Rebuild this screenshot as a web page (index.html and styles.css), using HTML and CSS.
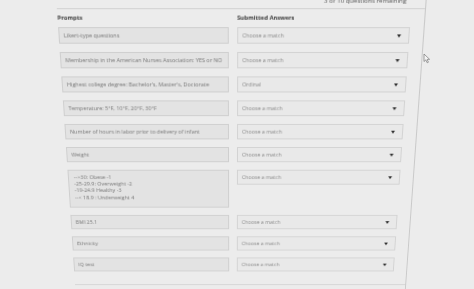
FILE: index.html
```html
<!DOCTYPE html>
<html>
<head>
<meta charset="utf-8">
<link rel="stylesheet" href="styles.css">
</head>
<body>
<div class="stage">
  <div class="page">
    <div class="remaining">3 of 10 questions remaining</div>
    <div class="panel">
      <div class="heads">
        <div class="head">Prompts</div>
        <div class="head">Submitted Answers</div>
      </div>
      <div class="grid">
        <div class="prompt">Likert-type questions</div>
        <div class="select"><span>Choose a match</span><i class="caret"></i></div>

        <div class="prompt">Membership in the American Nurses Association: YES or NO</div>
        <div class="select"><span>Choose a match</span><i class="caret"></i></div>

        <div class="prompt">Highest college degree: Bachelor's, Master's, Doctorate</div>
        <div class="select"><span>Ordinal</span><i class="caret"></i></div>

        <div class="prompt">Temperature: 5°F, 10°F, 20°F, 30°F</div>
        <div class="select"><span>Choose a match</span><i class="caret"></i></div>

        <div class="prompt">Number of hours in labor prior to delivery of infant</div>
        <div class="select"><span>Choose a match</span><i class="caret"></i></div>

        <div class="prompt">Weight</div>
        <div class="select"><span>Choose a match</span><i class="caret"></i></div>

        <div class="prompt multi">
          <div>--&gt;30: Obese -1</div>
          <div>-25-29.9: Overweight -2</div>
          <div>-19-24.9 Healthy -3</div>
          <div>--&lt; 18.9 : Underweight 4</div>
        </div>
        <div class="select"><span>Choose a match</span><i class="caret"></i></div>

        <div class="prompt">BMI 25.1</div>
        <div class="select"><span>Choose a match</span><i class="caret"></i></div>

        <div class="prompt">Ethnicity</div>
        <div class="select"><span>Choose a match</span><i class="caret"></i></div>

        <div class="prompt">IQ test</div>
        <div class="select"><span>Choose a match</span><i class="caret"></i></div>
      </div>
    </div>
  </div>
</div>
<svg class="cursor" width="8" height="11" viewBox="0 0 8 11">
  <path d="M1 1 L1 8.5 L2.8 6.9 L4.2 9.8 L5.4 9.2 L4.1 6.4 L6.6 6.3 Z" fill="#f4f4f4" stroke="#777" stroke-width="0.7" stroke-linejoin="round"/>
</svg>
</body>
</html>
```

FILE: styles.css
```css
html, body {
  margin: 0;
  padding: 0;
  width: 474px;
  height: 289px;
  overflow: hidden;
  background: #ececec;
  font-family: "Open Sans", "DejaVu Sans", sans-serif;
}

.stage {
  width: 474px;
  height: 330px;
  transform-origin: 233px 150px;
  transform: perspective(800px) rotateX(-17.5deg);
}

.page {
  margin-left: 66px;
  width: 349px;
  height: 330px;
  border-right: 1px solid #c9c9c9;
}

.remaining {
  margin-top: -2px;
  height: 8px;
  line-height: 8px;
  font-size: 6px;
  color: #555;
  text-align: right;
  padding-right: 18px;
}

.panel {
  margin-top: 3px;
  border-top: 1px solid #d2d2d2;
  border-bottom: 1px solid #d2d2d2;
  padding: 4px 0 15px 0;
}

.heads {
  display: grid;
  grid-template-columns: 163px 165px;
  column-gap: 8px;
  height: 8px;
  margin-bottom: 5px;
}

.head {
  font-size: 5.6px;
  line-height: 8px;
  font-weight: 700;
  color: #3a3a3a;
}

.grid {
  display: grid;
  grid-template-columns: 163px 165px;
  column-gap: 8px;
  row-gap: 8px;
  align-items: start;
}

.prompt {
  box-sizing: border-box;
  height: 16px;
  background: #e3e3e3;
  border: 1px solid #cfcfcf;
  padding: 0 4px;
  font-size: 5.45px;
  line-height: 14px;
  color: #777;
  white-space: nowrap;
}

.prompt.multi {
  height: 41px;
  padding: 4px 5px;
  line-height: 7.2px;
}

.select {
  box-sizing: border-box;
  height: 16px;
  background: #e9e9e9;
  border: 1px solid #d3d3d3;
  padding: 0 7px 0 4px;
  display: flex;
  align-items: center;
  justify-content: space-between;
  font-size: 5.3px;
  color: #888;
}

.caret {
  width: 0;
  height: 0;
  border-left: 2.2px solid transparent;
  border-right: 2.2px solid transparent;
  border-top: 3px solid #2e2e2e;
}

.cursor {
  position: absolute;
  left: 423px;
  top: 53px;
}
```
